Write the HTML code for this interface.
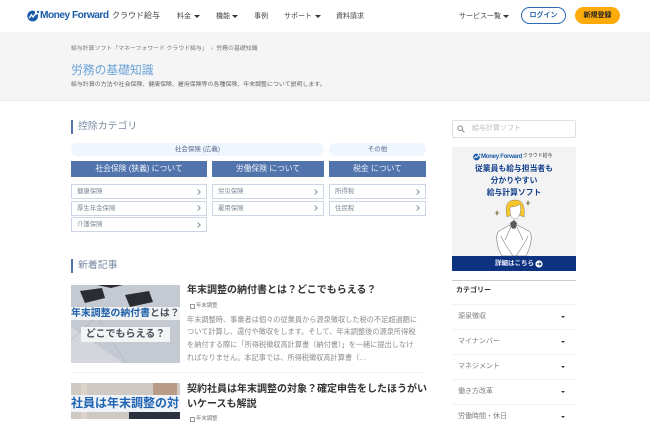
<!DOCTYPE html>
<html lang="ja"><head><meta charset="utf-8">
<style>
html,body{margin:0;padding:0}
body{width:650px;height:419px;overflow:hidden;position:relative;background:#fff;font-family:"Liberation Sans","Noto Sans CJK JP",sans-serif;color:#333}
.a{position:absolute;white-space:nowrap}
.c{text-align:center}
.nav{font-size:7px;line-height:12px;top:10.500px;color:#444}
.tri{position:absolute;width:0;height:0;border-left:3px solid transparent;border-right:3px solid transparent;border-top:3.500px solid #333}
.pill{background:#f0f6ff;border-radius:7px;top:143px;height:13px;line-height:13px;font-size:6.500px;color:#56688a;text-align:center}
.btn{background:#5174ad;top:161px;height:16px;line-height:16px;color:#eef3fa;text-align:center;font-size:7.800px}
.li{box-sizing:border-box;height:15px;border:1px solid #ccd5e5;line-height:13px;font-size:6.400px;color:#7d8696;padding-left:5px}
.li:after{content:"";position:absolute;right:6px;top:4.500px;width:3px;height:3px;border-top:.7px solid #8a93a3;border-right:.7px solid #8a93a3;transform:rotate(45deg)}
.h2{font-size:9.900px;line-height:14px;color:#7a8aa3;border-left:2px solid #5174ad;padding-left:5px;left:71px}
.ttl{font-size:10px;font-weight:bold;color:#333;left:187px;line-height:14.500px}
.tag{font-size:5.400px;color:#777;left:196px;line-height:8px}
.tag:before{content:"";position:absolute;left:-6px;top:2.500px;width:3px;height:2.500px;border:.6px solid #999}
.d{font-size:7.200px;color:#8c8c8c;left:187px;line-height:12.700px}
.sd{left:452px;width:124px;box-sizing:border-box;border-top:1px solid #f3f3f3;height:25px;line-height:23px;font-size:7px;color:#7c7c7c;padding-left:6px}
.sd .tri{left:109px;top:11px;border-left-width:2.200px;border-right-width:2.200px;border-top-width:2.800px}
</style></head><body>

<!-- header -->
<svg class="a" style="left:27px;top:9.500px" width="13" height="12" viewBox="0 0 13 12"><circle cx="5.700" cy="6" r="5.400" fill="#1a5ba8"/><path d="M7.500 0L12 0L12 3.500L8.500 5Z" fill="#fff"/><path d="M2.200 8.200L4.400 4.800L6 7L8.500 3.800" fill="none" stroke="#fff" stroke-width="1.300"/><circle cx="11" cy="2" r="1.200" fill="#1a5ba8"/></svg>
<div class="a" style="left:40px;top:8px;font-size:10.200px;font-weight:bold;line-height:15px;color:#1a5ba8;letter-spacing:-.52px">Money Forward</div>
<div class="a" style="left:112px;top:8px;font-size:8px;line-height:15px;color:#444">クラウド給与</div>
<div class="a nav" style="left:177px">料金</div><div class="tri" style="left:194px;top:15px"></div>
<div class="a nav" style="left:216px">機能</div><div class="tri" style="left:232px;top:15px"></div>
<div class="a nav" style="left:254px">事例</div>
<div class="a nav" style="left:284px">サポート</div><div class="tri" style="left:315px;top:15px"></div>
<div class="a nav" style="left:336px">資料請求</div>
<div class="a nav" style="left:459px">サービス一覧</div><div class="tri" style="left:503px;top:14.500px"></div>
<div class="a c" style="left:521px;top:7px;width:45px;height:17px;box-sizing:border-box;border:1px solid #2a6cb5;border-radius:9px;font-size:7px;line-height:15px;color:#2a63a5;font-weight:bold">ログイン</div>
<div class="a c" style="left:575px;top:7px;width:45px;height:17px;background:#fdab0b;border-radius:9px;font-size:7px;line-height:17px;color:#222;font-weight:bold">新規登録</div>

<!-- hero -->
<div class="a" style="left:0;top:32px;width:650px;height:68px;background:#f5f5f5;border-bottom:1px solid #e8e8e8"></div>
<div class="a" style="left:71px;top:44.500px;font-size:5.900px;line-height:8px;color:#777">給与計算ソフト「マネーフォワード クラウド給与」 &nbsp;› &nbsp;労務の基礎知識</div>
<div class="a" style="left:71px;top:62px;font-size:11.800px;line-height:16px;color:#6ba3d8">労務の基礎知識</div>
<div class="a" style="left:71px;top:81px;font-size:5.950px;line-height:8px;color:#666">給与計算の方法や社会保険、健康保険、雇用保険等の各種保険、年末調整について説明します。</div>

<!-- categories -->
<div class="a h2" style="top:120px">控除カテゴリ</div>
<div class="a pill" style="left:71px;width:253px">社会保険 (広義)</div>
<div class="a pill" style="left:329px;width:97px">その他</div>
<div class="a btn" style="left:71px;width:136px">社会保険 (狭義) について</div>
<div class="a btn" style="left:212px;width:112px">労働保険 について</div>
<div class="a btn" style="left:329px;width:97px">税金 について</div>
<div class="a li" style="left:71px;top:184px;width:136px">健康保険</div>
<div class="a li" style="left:71px;top:200.500px;width:136px">厚生年金保険</div>
<div class="a li" style="left:71px;top:217px;width:136px">介護保険</div>
<div class="a li" style="left:212px;top:184px;width:112px">労災保険</div>
<div class="a li" style="left:212px;top:200.500px;width:112px">雇用保険</div>
<div class="a li" style="left:329px;top:184px;width:97px">所得税</div>
<div class="a li" style="left:329px;top:200.500px;width:97px">住民税</div>

<!-- articles -->
<div class="a h2" style="top:259px">新着記事</div>

<div class="a" style="left:71px;top:285px;width:109px;height:78px;background:#c5c9d1;overflow:hidden">
  <svg class="a" style="left:0;top:0" width="109" height="78" viewBox="0 0 109 78"><path d="M0 42L52 78H0Z" fill="#d3d6dc"/><path d="M0 55L25 32M25 30L55 78" stroke="#aeb3bc" stroke-width=".6" fill="none"/><path d="M9 6L31 3L34 13L14 18Z" fill="#2b2d33"/><path d="M54 10L78 6L82 17L59 22Z" fill="#2b2d33"/><path d="M26 0H52L40 3Z" fill="#2b2d33"/></svg>
  <div class="a" style="left:0;top:22px;width:109px;height:13px;background:#f2f3f5;font-size:9.900px;font-weight:bold;line-height:13px;color:#1d5fa8;overflow:hidden">年末調整の納付書<span style="color:#4a4f5a">とは？</span></div>
  <div class="a c" style="left:10px;top:42px;width:89px;height:15px;background:#f3f4f6;font-size:10px;font-weight:bold;line-height:15px;color:#4a4f5a">どこでもらえる？</div>
</div>
<div class="a ttl" style="top:284px">年末調整の納付書とは？どこでもらえる？</div>
<div class="a tag" style="top:301.500px">年末調整</div>
<div class="a d" style="top:313.500px">年末調整時、事業者は個々の従業員から源泉徴収した税の不足超過額に<br>ついて計算し、還付や徴収をします。そして、年末調整後の源泉所得税<br>を納付する際に「所得税徴収高計算書（納付書）」を一緒に提出しなけ<br>ればなりません。本記事では、所得税徴収高計算書（…</div>
<div class="a" style="left:71px;top:372px;width:354px;height:1px;background:#f2f2f2"></div>

<div class="a" style="left:71px;top:383px;width:109px;height:36px;background:#cfc9c4;overflow:hidden">
  <div class="a" style="left:10px;top:0;width:6px;height:36px;background:#dcd4cc"></div>
  <div class="a" style="left:82px;top:0;width:24px;height:12px;background:#b89c88"></div>
  <div class="a" style="left:58px;top:29px;width:51px;height:7px;background:#2c3140"></div>
  <div class="a" style="left:0;top:12px;width:109px;height:17px;background:#eff2f6;font-size:12px;font-weight:bold;line-height:17px;color:#1d64b4;overflow:hidden">社員は年末調整の対</div>
</div>
<div class="a ttl" style="top:383px">契約社員は年末調整の対象？確定申告をしたほうがい<br>いケースも解説</div>
<div class="a tag" style="top:414.500px">年末調整</div>

<!-- sidebar -->
<div class="a" style="left:452px;top:120px;width:124px;height:18px;box-sizing:border-box;border:1px solid #e0e0e0;border-radius:2px;font-size:7px;line-height:16px;color:#bbb;padding-left:19px">給与計算ソフト</div>
<svg class="a" style="left:457px;top:125px" width="8" height="8" viewBox="0 0 8 8"><circle cx="3.200" cy="3.200" r="2.300" fill="none" stroke="#888" stroke-width="1"/><path d="M5 5L7.400 7.400" stroke="#888" stroke-width="1.100"/></svg>

<div class="a" style="left:452px;top:147px;width:124px;height:124px;background:#f3f3f3"></div>
<svg class="a" style="left:473px;top:153px" width="8" height="8" viewBox="0 0 13 12"><circle cx="5.700" cy="6" r="5.400" fill="#1a5ba8"/><path d="M7.500 0L12 0L12 3.500L8.500 5Z" fill="#f3f3f3"/><path d="M2.200 8.200L4.400 4.800L6 7L8.500 3.800" fill="none" stroke="#fff" stroke-width="1.300"/><circle cx="11" cy="2" r="1.200" fill="#1a5ba8"/></svg>
<div class="a" style="left:481px;top:153px;font-size:6.100px;font-weight:bold;line-height:8px;color:#1a5ba8;letter-spacing:-.3px">Money Forward</div>
<div class="a" style="left:523px;top:153px;font-size:4.900px;line-height:8px;color:#444">クラウド給与</div>
<div class="a c" style="left:452px;width:124px;top:163px;font-size:7.800px;font-weight:bold;line-height:12.200px;color:#123f8c">従業員も給与担当者も<br>分かりやすい<br>給与計算ソフト</div>
<svg class="a" style="left:480px;top:190px" width="70" height="66" viewBox="0 0 70 66">
  <path d="M27 27C25 18 26 10 35 10C44 10 45 18 44 27L39 25H31Z" fill="#f7c72c" stroke="#666" stroke-width=".4"/>
  <path d="M30 17C34 17 38 16 40 14C41 18 41 22 39 26C37 30 33 30 31 26C30 23 30 20 30 17Z" fill="#fff" stroke="#666" stroke-width=".4"/>
  <path d="M22 66C16 56 16 45 18 42C20 40 27 37 29 35L33 38L37 35C40 37 48 40 50 42C53 48 50 58 46 66Z" fill="#fff" stroke="#555" stroke-width=".5"/>
  <path d="M21 46C24 53 29 60 33 66M48 46C45 53 40 60 36 66M31 37L25 50M37 37L43 50" fill="none" stroke="#555" stroke-width=".5"/>
  <path d="M30 33L34 30L37 33L36 38L33 39L31 37Z" fill="#5a5a5a"/>
  <path d="M48 10L49 12.500L51 13L49 13.500L48 16L47 13.500L45 13L47 12.500ZM17 20L18 22.500L20 23L18 23.500L17 26L16 23.500L14 23L16 22.500Z" fill="#8a7d58"/>
</svg>
<div class="a" style="left:452px;top:256px;width:124px;height:15px;background:#0d3380"></div>
<div class="a" style="left:495px;top:256px;font-size:6.500px;font-weight:bold;line-height:15px;color:#eef">詳細はこちら</div>
<svg class="a" style="left:535px;top:260px" width="8" height="8" viewBox="0 0 8 8"><circle cx="4" cy="4" r="3.600" fill="#fff"/><path d="M2 4H6M4.500 2.500L6 4L4.500 5.500" fill="none" stroke="#0d3380" stroke-width=".9"/></svg>

<div class="a" style="left:452px;top:280px;width:124px;height:1px;background:#ccc"></div>
<div class="a" style="left:456px;top:286px;font-size:7px;font-weight:bold;line-height:10px;color:#333">カテゴリー</div>
<div class="a sd" style="top:304px">源泉徴収<div class="tri"></div></div>
<div class="a sd" style="top:329px">マイナンバー<div class="tri"></div></div>
<div class="a sd" style="top:354px">マネジメント<div class="tri"></div></div>
<div class="a sd" style="top:379px">働き方改革<div class="tri"></div></div>
<div class="a sd" style="top:404px">労働時間・休日<div class="tri"></div></div>
</body></html>
